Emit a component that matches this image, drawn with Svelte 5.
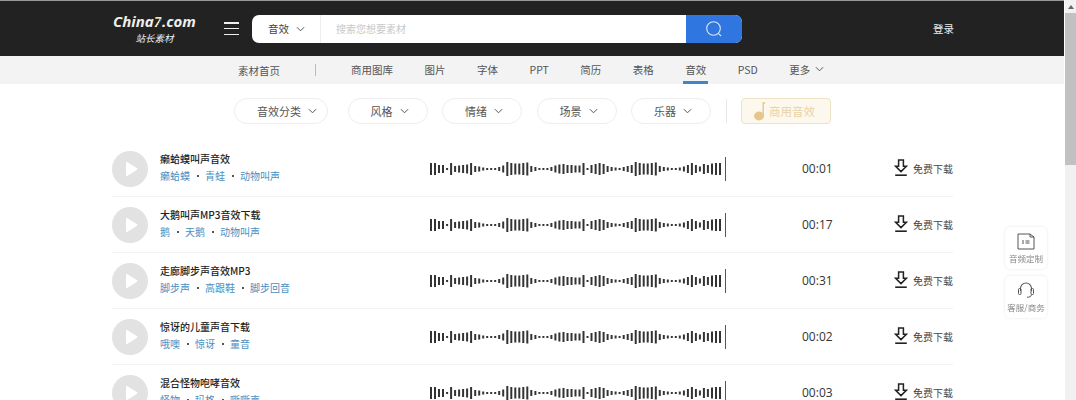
<script>
	const navItems = ['商用图库', '图片', '字体', 'PPT', '简历', '表格', '音效', 'PSD'];
	const filters = ['音效分类', '风格', '情绪', '场景', '乐器'];
	const sounds = [
		{ title: '癞蛤蟆叫声音效', tags: ['癞蛤蟆', '青蛙', '动物叫声'], time: '00:01' },
		{ title: '大鹅叫声MP3音效下载', tags: ['鹅', '天鹅', '动物叫声'], time: '00:17' },
		{ title: '走廊脚步声音效MP3', tags: ['脚步声', '高跟鞋', '脚步回音'], time: '00:31' },
		{ title: '惊讶的儿童声音下载', tags: ['哦噢', '惊讶', '童音'], time: '00:02' },
		{ title: '混合怪物咆哮音效', tags: ['怪物', '玛格', '嘶嘶声'], time: '00:03' }
	];

	const heights = [
		12, 12, 8, 8, 2, 12, 6, 7, 8, 9, 12, 6, 5, 3, 2, 2, 2, 4, 7, 14, 12, 11, 11, 12, 13, 6, 4, 2, 2, 2, 4, 7, 9, 10, 8, 8,
		7, 7, 12, 2, 8, 10, 12, 10, 6, 4, 3, 2, 4, 6, 8, 14, 12, 11, 11, 12, 13, 6, 4, 3, 2, 2, 3, 5, 8, 12, 8, 5, 10, 8, 11, 12, 12
	];
	const step = 293 / heights.length;
</script>

<div class="page">
	<header class="top">
		<div class="logo">
			<div class="logo-name">China<span class="seven">7</span>.com</div>
			<div class="logo-sub">站长素材</div>
		</div>
		<button class="menu" aria-label="菜单"><i></i><i></i><i></i></button>
		<div class="search">
			<div class="search-type">音效
				<svg class="chev" viewBox="0 0 10 6"><path d="M1 1l4 4 4-4" /></svg>
			</div>
			<div class="search-input">搜索您想要素材</div>
			<div class="search-btn">
				<svg viewBox="0 0 18 18" width="18" height="18"><circle cx="8.5" cy="8.5" r="6.8" /><path d="M13.4 13.4l2.8 2.8" /></svg>
			</div>
		</div>
		<a class="login" href="#login">登录</a>
	</header>

	<nav class="nav">
		<a href="#home" class="home">素材首页</a>
		<span class="sep"></span>
		<div class="nav-items">
			{#each navItems as item}
				<a href="#item" class:active={item === '音效'}>{item}</a>
			{/each}
			<a href="#more">更多
				<svg class="chev" viewBox="0 0 10 6"><path d="M1 1l4 4 4-4" /></svg>
			</a>
		</div>
	</nav>

	<div class="filters">
		{#each filters as f, i}
			<button class="pill" class:wide={i === 0}>{f}
				<svg class="chev" viewBox="0 0 10 6"><path d="M1 1l4 4 4-4" /></svg>
			</button>
		{/each}
		<span class="filter-sep"></span>
		<button class="biz">
			<svg viewBox="0 0 14 20" width="14" height="20"><ellipse cx="6" cy="15" rx="5" ry="4.4" fill="#e5c78b" /><path d="M10.2 15V2h2" fill="none" stroke="#e5c78b" stroke-width="1.4" /></svg>
			商用音效
		</button>
	</div>

	<ul class="list">
		{#each sounds as s}
			<li class="row">
				<div class="play">
					<svg viewBox="0 0 36 36" width="36" height="36"><path d="M15 12 L24.5 18 L15 24 Z" fill="#fff" stroke="#fff" stroke-width="2" stroke-linejoin="round" /></svg>
				</div>
				<div class="info">
					<div class="title">{s.title}</div>
					<div class="tags">
						{#each s.tags as t, i}
							{#if i > 0}<span class="dot"></span>{/if}
							<a href="#tag">{t}</a>
						{/each}
					</div>
				</div>
				<svg class="wave" viewBox="0 0 296 24" width="296" height="24">
					{#each heights as h, i}
						<rect x={(i * step).toFixed(1)} y={12 - h / 2} width="2" height={h} fill="#333" />
					{/each}
					<rect x="295" y="0" width="1" height="24" fill="#555" />
				</svg>
				<div class="time">{s.time}</div>
				<a class="down" href="#down">
					<svg viewBox="0 0 14 18" width="14" height="18"><path d="M4.6 1h4.8v6.2h3L7 12.6 1.6 7.2h3z" fill="none" stroke="#222" stroke-width="1.5" /><path d="M1.2 16.2h11.6" stroke="#222" stroke-width="1.6" /></svg>
					免费下载
				</a>
			</li>
		{/each}
	</ul>
</div>

<aside class="side">
	<div class="side-card">
		<svg viewBox="0 0 18 18" width="18" height="18"><path d="M1 2h12l4 3v12H1z" fill="none" stroke="#555" /><path d="M13 2v3h4" fill="none" stroke="#555" /><path d="M5 9h2M5 11h2M8.500 9h4M8.500 11h4" stroke="#555" /></svg>
		<span>音频定制</span>
	</div>
	<div class="side-card">
		<svg viewBox="0 0 18 18" width="18" height="18"><path d="M3.500 10V7.500a5.500 5.500 0 0 1 11 0V10" fill="none" stroke="#555" stroke-width="1.100" /><rect x="1.500" y="7.500" width="2.500" height="6" rx="1" fill="none" stroke="#555" /><rect x="14" y="7.500" width="2.500" height="6" rx="1" fill="none" stroke="#555" /><path d="M14.500 13.500c0 2-2.500 2.800-4.500 2.800" fill="none" stroke="#555" /></svg>
		<span>客服/商务</span>
	</div>
</aside>

<div class="scrollbar">
	<div class="arrow"></div>
	<div class="thumb"></div>
</div>

<style>
	:global(body) {
		background: #fff;
		overflow: hidden;
		font-family: "Noto Sans CJK SC", "Noto Sans", sans-serif;
	}

	a {
		color: inherit;
		text-decoration: none;
	}

	button {
		font: inherit;
		cursor: pointer;
	}

	.page {
		width: 1064px;
		height: 400px;
		overflow: hidden;
	}

	.chev {
		width: 9px;
		height: 6px;
		fill: none;
		stroke: #555;
		stroke-width: 1.1;
	}

	.top {
		height: 55px;
		border-top: 1px solid #999;
		background: #222;
		display: flex;
		align-items: center;
		padding-left: 112px;
		color: #fff;
	}

	.logo {
		width: 85px;
		text-align: center;
		color: #eee;
	}

	.logo-name {
		font: italic bold 15px/18px "Open Sans", sans-serif;
		white-space: nowrap;
	}

	.seven {
		background: linear-gradient(118deg, #f3e6b0 58%, #3f86d8 58%);
		background-clip: text;
		-webkit-background-clip: text;
		color: transparent;
	}

	.logo-sub {
		font: italic 9.500px/14px "Noto Sans CJK SC", sans-serif;
		margin-top: 1px;
	}

	.menu {
		width: 15px;
		height: 13px;
		margin-left: 27px;
		padding: 0;
		border: 0;
		background: none;
		display: flex;
		flex-direction: column;
		justify-content: space-between;
	}

	.menu i {
		display: block;
		height: 1.500px;
		background: #eee;
	}

	.search {
		width: 490px;
		height: 28px;
		margin-left: 13px;
		border-radius: 7px;
		background: #fff;
		overflow: hidden;
		display: flex;
		align-items: center;
		font-size: 10.500px;
	}

	.search-type {
		width: 69px;
		height: 100%;
		box-sizing: border-box;
		padding-left: 16px;
		display: flex;
		align-items: center;
		gap: 7px;
		color: #444;
		border-right: 1px solid #eee;
	}

	.search-input {
		flex: 1;
		padding-left: 15px;
		font-size: 10px;
		color: #c8c8c8;
	}

	.search-btn {
		width: 56px;
		height: 100%;
		background: #2f76e0;
		display: flex;
		align-items: center;
		justify-content: center;
	}

	.search-btn svg {
		fill: none;
		stroke: #dce9fb;
		stroke-width: 1.1;
	}

	.login {
		margin-left: 191px;
		font-size: 10.500px;
		color: #eee;
	}

	.nav {
		height: 28px;
		background: #f3f3f3;
		display: flex;
		align-items: center;
		padding-left: 238px;
		font-size: 10.500px;
		color: #555;
	}

	.home {
		width: 77px;
	}

	.sep {
		width: 1px;
		height: 12px;
		background: #bbb;
	}

	.nav-items {
		display: flex;
		margin-left: 35px;
		height: 100%;
		gap: 31.500px;
		align-items: center;
	}

	.nav-items a {
		display: flex;
		align-items: center;
		gap: 5px;
		height: 100%;
		padding-bottom: 2px;
		box-sizing: border-box;
	}

	.nav-items a.active {
		padding: 0 2px 2px;
		margin: 0 -2px;
		box-shadow: inset 0 -3px 0 #3f86c8;
	}

	.filters {
		display: flex;
		align-items: center;
		gap: 14.500px;
		height: 26px;
		margin: 14px 0 0 234px;
	}

	.pill {
		width: 80px;
		height: 26px;
		box-sizing: border-box;
		padding: 0 0 0 22px;
		border: 1px solid #eeeeee;
		border-radius: 13px;
		background: #fff;
		display: flex;
		align-items: center;
		gap: 7px;
		font-size: 11px;
		color: #555;
		white-space: nowrap;
	}

	.pill.wide {
		width: 94px;
		margin-right: 5px;
	}

	.filter-sep {
		width: 1px;
		height: 24px;
		background: #e8e8e8;
	}

	.biz {
		width: 90px;
		height: 26px;
		box-sizing: border-box;
		padding: 0 0 0 11px;
		border: 1px solid #f0e2c4;
		border-radius: 4px;
		background: #fdf8ee;
		display: flex;
		align-items: center;
		gap: 2px;
		font-size: 11.500px;
		color: #e8d3a6;
		white-space: nowrap;
	}

	.list {
		list-style: none;
		margin: 17px 0 0 112px;
		padding: 0;
		width: 841px;
	}

	.row {
		height: 55px;
		border-bottom: 1px solid #f3f3f3;
		display: flex;
		align-items: center;
	}

	.play {
		width: 36px;
		height: 36px;
		border-radius: 50%;
		background: #e2e2e2;
		flex: none;
	}

	.play svg {
		display: block;
	}

	.info {
		width: 270px;
		margin: 0 0 2px 12px;
		flex: none;
	}

	.title {
		font-size: 10px;
		line-height: 16px;
		font-weight: 500;
		color: #222;
	}

	.tags {
		display: flex;
		align-items: center;
		font-size: 10px;
		line-height: 18px;
		color: #4a90c2;
	}

	.dot {
		width: 2px;
		height: 2px;
		margin: 0 6px 0 7px;
		background: #555;
	}

	.wave {
		flex: none;
	}

	.time {
		margin-left: 76px;
		width: 92px;
		flex: none;
		font: 12px "Open Sans", sans-serif;
		color: #333;
	}

	.down {
		display: flex;
		align-items: center;
		gap: 5px;
		margin-bottom: 1px;
		font-size: 10px;
		color: #444;
		white-space: nowrap;
	}

	.side {
		position: fixed;
		left: 1005px;
		top: 227px;
		display: flex;
		flex-direction: column;
		gap: 7px;
	}

	.side-card {
		width: 42px;
		height: 42px;
		background: #fff;
		border-radius: 5px;
		box-shadow: 0 0 3px rgba(0, 0, 0, 0.1);
		display: flex;
		flex-direction: column;
		align-items: center;
		justify-content: center;
		font-size: 8.500px;
		color: #888;
		white-space: nowrap;
	}

	.side-card svg {
		margin-bottom: 2px;
	}

	.scrollbar {
		position: fixed;
		right: 0;
		top: 0;
		width: 11px;
		height: 400px;
		border-left: 1px solid #fff;
		background: #f1f1f1;
	}

	.arrow {
		height: 13px;
		position: relative;
	}

	.arrow::after {
		content: '';
		position: absolute;
		left: 3px;
		top: 5px;
		border: 3px solid transparent;
		border-top: 0;
		border-bottom: 4px solid #666;
	}

	.thumb {
		height: 152px;
		background: #c1c1c1;
	}
</style>
